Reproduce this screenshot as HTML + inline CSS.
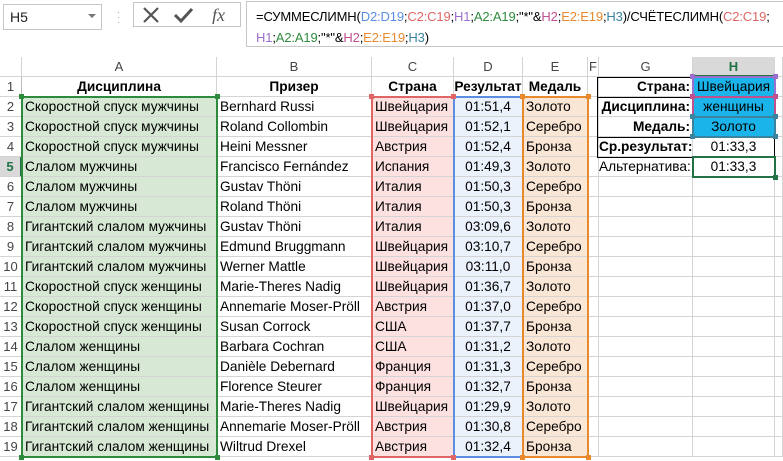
<!DOCTYPE html>
<html><head><meta charset="utf-8"><style>
*{box-sizing:border-box;margin:0;padding:0}
body{width:783px;height:461px;overflow:hidden;background:#fff;font-family:"Liberation Sans","Noto Sans CJK SC",sans-serif;font-size:13.7px;color:#000;position:relative}
.abs{position:absolute}
#grid{position:absolute;left:0;top:57px;display:grid;grid-template-columns:22px 195px 155px 82px 69px 65px 11px 94px 82px 8px;grid-auto-rows:20px}
#grid div{border-right:1px solid #d4d4d4;border-bottom:1px solid #d4d4d4;white-space:nowrap;overflow:hidden;line-height:19px;padding:0 3px}
#grid .h{background:#fff;color:#444;text-align:center;padding:0;font-size:13px}
#grid .rh{color:#444;text-align:center;padding:0;border-right:1px solid #bbb;font-size:13px}
#grid .a{background:#d7e8d5}
#grid .c{background:#fde1e1}
#grid .d{background:#ebf2fb;text-align:center}
#grid .e{background:#fae6d4}
#grid .b{font-weight:bold;text-align:center;padding:0}
#grid .r{text-align:right;font-weight:bold;padding:0 2px 0 0}
#grid .cy{background:#1ab3ea;text-align:center}
.sq{position:absolute;width:5px;height:5px}
.fb span{white-space:nowrap}
</style></head><body>
<div class="abs" style="left:3px;top:4px;width:99px;height:26px;border:1px solid #c6c6c6;background:#fff;font-size:14px;line-height:24px;padding-left:6px;color:#222">H5</div>
<div class="abs" style="left:88px;top:14px;width:0;height:0;border-left:4px solid transparent;border-right:4px solid transparent;border-top:4px solid #777"></div>
<div class="abs" style="left:117px;top:10px;color:#999;font-size:10px;line-height:5px">·<br>·<br>·</div>
<div class="abs" style="left:133px;top:2px;width:108px;height:25px;border:1px solid #c6c6c6;background:#fff"></div>
<svg class="abs" style="left:140px;top:6px" width="100" height="18"><path d="M4 2 L18 16 M18 2 L4 16" stroke="#555" stroke-width="2.2"/><path d="M35 9 L41 15 L52 3" stroke="#555" stroke-width="3" fill="none"/><text x="72" y="15" font-family="Liberation Serif" font-style="italic" font-size="18" fill="#555">fx</text></svg>
<div class="abs" style="left:246px;top:1px;width:540px;height:46px;border:1px solid #c6c6c6;border-right:none;background:#fff"></div>
<div class="abs fb" style="left:256px;top:6px;font-size:13px;line-height:21px;letter-spacing:-0.15px">
<span>=СУММЕСЛИМН(<span style="color:#5b8ee0">D2:D19</span>;<span style="color:#e06666">C2:C19</span>;<span style="color:#9b6fce">H1</span>;<span style="color:#2e8b3d">A2:A19</span>;"*"&amp;<span style="color:#c0508e">H2</span>;<span style="color:#e8892e">E2:E19</span>;<span style="color:#3a84a0">H3</span>)/СЧЁТЕСЛИМН(<span style="color:#e06666">C2:C19</span>;</span><br>
<span><span style="color:#9b6fce">H1</span>;<span style="color:#2e8b3d">A2:A19</span>;"*"&amp;<span style="color:#c0508e">H2</span>;<span style="color:#e8892e">E2:E19</span>;<span style="color:#3a84a0">H3</span>)</span></div>

<div id="grid">
<div class="h" style="background:#fff"></div><div class="h">A</div><div class="h">B</div><div class="h">C</div><div class="h">D</div><div class="h">E</div><div class="h">F</div><div class="h">G</div><div class="h" style="background:#d9d9d9;color:#217346;font-weight:bold;border-bottom:2px solid #217346">H</div><div class="h"></div>
<div class="rh">1</div><div class="b">Дисциплина</div><div class="b">Призер</div><div class="b">Страна</div><div class="b">Результат</div><div class="b">Медаль</div><div></div><div class="r">Страна:</div><div class="cy">Швейцария</div><div></div>
<div class="rh">2</div><div class="a">Скоростной спуск мужчины</div><div>Bernhard Russi</div><div class="c">Швейцария</div><div class="d">01:51,4</div><div class="e">Золото</div><div></div><div class="r">Дисциплина:</div><div class="cy">женщины</div><div></div>
<div class="rh">3</div><div class="a">Скоростной спуск мужчины</div><div>Roland Collombin</div><div class="c">Швейцария</div><div class="d">01:52,1</div><div class="e">Серебро</div><div></div><div class="r">Медаль:</div><div class="cy">Золото</div><div></div>
<div class="rh">4</div><div class="a">Скоростной спуск мужчины</div><div>Heini Messner</div><div class="c">Австрия</div><div class="d">01:52,4</div><div class="e">Бронза</div><div></div><div class="r">Ср.результат:</div><div style="text-align:center">01:33,3</div><div></div>
<div class="rh" style="background:#d9d9d9;color:#217346;font-weight:bold;border-right:2px solid #217346">5</div><div class="a">Слалом мужчины</div><div>Francisco Fernández</div><div class="c">Испания</div><div class="d">01:49,3</div><div class="e">Золото</div><div></div><div style="text-align:right;padding:0 2px 0 0">Альтернатива:</div><div style="text-align:center">01:33,3</div><div></div>
<div class="rh">6</div><div class="a">Слалом мужчины</div><div>Gustav Thöni</div><div class="c">Италия</div><div class="d">01:50,3</div><div class="e">Серебро</div><div></div><div></div><div></div><div></div>
<div class="rh">7</div><div class="a">Слалом мужчины</div><div>Roland Thöni</div><div class="c">Италия</div><div class="d">01:50,3</div><div class="e">Бронза</div><div></div><div></div><div></div><div></div>
<div class="rh">8</div><div class="a">Гигантский слалом мужчины</div><div>Gustav Thöni</div><div class="c">Италия</div><div class="d">03:09,6</div><div class="e">Золото</div><div></div><div></div><div></div><div></div>
<div class="rh">9</div><div class="a">Гигантский слалом мужчины</div><div>Edmund Bruggmann</div><div class="c">Швейцария</div><div class="d">03:10,7</div><div class="e">Серебро</div><div></div><div></div><div></div><div></div>
<div class="rh">10</div><div class="a">Гигантский слалом мужчины</div><div>Werner Mattle</div><div class="c">Швейцария</div><div class="d">03:11,0</div><div class="e">Бронза</div><div></div><div></div><div></div><div></div>
<div class="rh">11</div><div class="a">Скоростной спуск женщины</div><div>Marie-Theres Nadig</div><div class="c">Швейцария</div><div class="d">01:36,7</div><div class="e">Золото</div><div></div><div></div><div></div><div></div>
<div class="rh">12</div><div class="a">Скоростной спуск женщины</div><div>Annemarie Moser-Pröll</div><div class="c">Австрия</div><div class="d">01:37,0</div><div class="e">Серебро</div><div></div><div></div><div></div><div></div>
<div class="rh">13</div><div class="a">Скоростной спуск женщины</div><div>Susan Corrock</div><div class="c">США</div><div class="d">01:37,7</div><div class="e">Бронза</div><div></div><div></div><div></div><div></div>
<div class="rh">14</div><div class="a">Слалом женщины</div><div>Barbara Cochran</div><div class="c">США</div><div class="d">01:31,2</div><div class="e">Золото</div><div></div><div></div><div></div><div></div>
<div class="rh">15</div><div class="a">Слалом женщины</div><div>Danièle Debernard</div><div class="c">Франция</div><div class="d">01:31,3</div><div class="e">Серебро</div><div></div><div></div><div></div><div></div>
<div class="rh">16</div><div class="a">Слалом женщины</div><div>Florence Steurer</div><div class="c">Франция</div><div class="d">01:32,7</div><div class="e">Бронза</div><div></div><div></div><div></div><div></div>
<div class="rh">17</div><div class="a">Гигантский слалом женщины</div><div>Marie-Theres Nadig</div><div class="c">Швейцария</div><div class="d">01:29,9</div><div class="e">Золото</div><div></div><div></div><div></div><div></div>
<div class="rh">18</div><div class="a">Гигантский слалом женщины</div><div>Annemarie Moser-Pröll</div><div class="c">Австрия</div><div class="d">01:30,8</div><div class="e">Серебро</div><div></div><div></div><div></div><div></div>
<div class="rh">19</div><div class="a">Гигантский слалом женщины</div><div>Wiltrud Drexel</div><div class="c">Австрия</div><div class="d">01:32,4</div><div class="e">Бронза</div><div></div><div></div><div></div><div></div>
</div>

<div class="abs" style="left:597px;top:77px;width:98px;height:81px;border:1px solid #000;border-right:none"></div>
<div class="abs" style="left:597px;top:97px;width:96px;height:41px;border-top:1px solid #000;border-bottom:1px solid #000"></div>
<div class="abs" style="left:693px;top:137px;width:82px;height:21px;border:1px solid #000;border-left:none"></div>

<div class="abs" style="left:21px;top:96px;width:197px;height:362px;border:2px solid #2e8b3d"></div>
<div class="abs" style="left:371px;top:96px;width:84px;height:362px;border:2px solid #e06666"></div>
<div class="abs" style="left:453px;top:96px;width:71px;height:362px;border:2px solid #5b8ee0"></div>
<div class="abs" style="left:522px;top:96px;width:67px;height:362px;border:2px solid #e8892e"></div>
<div class="abs" style="left:692px;top:76px;width:84px;height:22px;border:2px solid #9b6fce"></div>
<div class="abs" style="left:692px;top:96px;width:84px;height:22px;border:2px solid #c0508e"></div>
<div class="abs" style="left:692px;top:116px;width:84px;height:22px;border:2px solid #3a84a0"></div>
<div class="abs" style="left:692px;top:156px;width:84px;height:22px;border:2px solid #217346"></div>
<div class="sq" style="left:19px;top:94px;background:#2e8b3d"></div><div class="sq" style="left:215px;top:94px;background:#2e8b3d"></div><div class="sq" style="left:19px;top:455px;background:#2e8b3d"></div><div class="sq" style="left:215px;top:455px;background:#2e8b3d"></div>
<div class="sq" style="left:369px;top:94px;background:#e06666"></div><div class="sq" style="left:369px;top:455px;background:#e06666"></div><div class="sq" style="left:451px;top:94px;background:#e06666"></div><div class="sq" style="left:451px;top:455px;background:#e06666"></div>
<div class="sq" style="left:520px;top:94px;background:#e8892e"></div><div class="sq" style="left:520px;top:455px;background:#e8892e"></div><div class="sq" style="left:586px;top:94px;background:#e8892e"></div><div class="sq" style="left:586px;top:455px;background:#e8892e"></div>
<div class="sq" style="left:690px;top:74px;background:#9b6fce"></div><div class="sq" style="left:773px;top:74px;background:#9b6fce"></div>
<div class="sq" style="left:690px;top:94px;background:#c0508e"></div><div class="sq" style="left:773px;top:94px;background:#c0508e"></div>
<div class="sq" style="left:690px;top:114px;background:#3a84a0"></div><div class="sq" style="left:773px;top:114px;background:#3a84a0"></div><div class="sq" style="left:690px;top:134px;background:#3a84a0"></div><div class="sq" style="left:773px;top:134px;background:#3a84a0"></div>
<div class="sq" style="left:773px;top:175px;background:#217346"></div>
</body></html>
